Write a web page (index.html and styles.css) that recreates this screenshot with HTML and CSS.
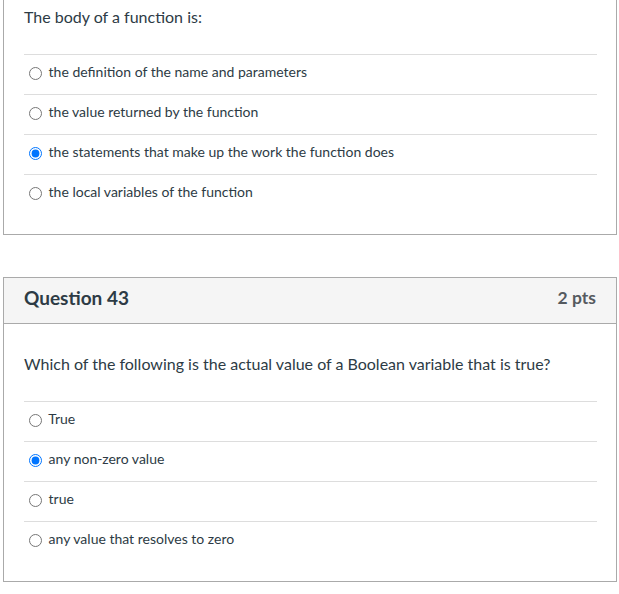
FILE: index.html
```html
<!DOCTYPE html>
<html>
<head>
<meta charset="utf-8">
<link rel="stylesheet" href="styles.css">
</head>
<body>
<div class="question clipped">
  <div class="q-body">
    <div class="q-text">The body of a function is:</div>
    <div class="answers">
      <label class="answer"><input type="radio" name="q42"> the definition of the name and parameters</label>
      <label class="answer"><input type="radio" name="q42"> the value returned by the function</label>
      <label class="answer"><input type="radio" name="q42" checked> the statements that make up the work the function does</label>
      <label class="answer"><input type="radio" name="q42"> the local variables of the function</label>
    </div>
  </div>
</div>
<div class="question">
  <div class="q-header">
    <span class="q-name">Question 43</span>
    <span class="q-points">2 pts</span>
  </div>
  <div class="q-body">
    <div class="q-text">Which of the following is the actual value of a Boolean variable that is true?</div>
    <div class="answers">
      <label class="answer"><input type="radio" name="q43"> True</label>
      <label class="answer"><input type="radio" name="q43" checked> any non-zero value</label>
      <label class="answer"><input type="radio" name="q43"> true</label>
      <label class="answer"><input type="radio" name="q43"> any value that resolves to zero</label>
    </div>
  </div>
</div>
</body>
</html>
```
FILE: styles.css
```css
html, body {
  margin: 0;
  padding: 0;
  background: #ffffff;
}
body {
  padding-left: 3px;
  font-family: Lato, "Liberation Sans", sans-serif;
  color: #2d3b45;
}
.question {
  width: 614px;
  box-sizing: border-box;
  border: 1px solid #aaaaaa;
  margin-bottom: 42px;
}
.question:last-child {
  margin-bottom: 0;
}
.question.clipped {
  border-top: none;
}
.q-header {
  height: 46px;
  box-sizing: border-box;
  background: #f5f5f5;
  border-bottom: 1px solid #aaaaaa;
  padding: 0 20px 6px 20px;
  display: flex;
  align-items: center;
  justify-content: space-between;
}
.q-name {
  font-size: 19px;
  font-weight: bold;
  color: #2d3b45;
}
.q-points {
  font-size: 17.5px;
  font-weight: bold;
  color: #555a5f;
}
.q-body {
  padding: 28px 19px 20px 20px;
}
.clipped .q-body {
  padding-top: 5px;
}
.q-text {
  font-size: 16px;
  line-height: 24px;
  margin-bottom: 25px;
}
.answers {
  display: flex;
  flex-direction: column;
}
.answer {
  height: 40px;
  box-sizing: border-box;
  border-top: 1px solid #dddddd;
  padding-bottom: 6px;
  display: flex;
  align-items: center;
  font-size: 14px;
  white-space: pre;
}
.answer input {
  margin: 4px 3px 0 5px;
  width: 13px;
  height: 13px;
}
```
